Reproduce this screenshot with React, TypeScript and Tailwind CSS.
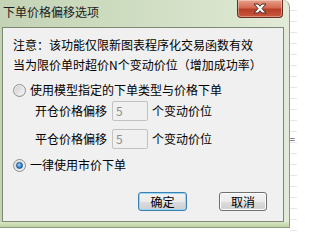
import React from 'react'

const font = { fontFamily: '"Noto Sans CJK SC", "Liberation Sans", sans-serif' }

function Radio({ checked }: { checked?: boolean }) {
  return (
    <span className="relative flex h-[13px] w-[13px] shrink-0 items-center justify-center rounded-full border border-[#8e8f8f] bg-[radial-gradient(circle_at_50%_40%,#ffffff,#dcdcdc)]">
      <span className="flex h-[9px] w-[9px] items-center justify-center rounded-full bg-[linear-gradient(135deg,#cfcfcf,#f7f7f7)]">
        {checked && (
          <span className="h-[7px] w-[7px] rounded-full border border-[#1d4f8c] bg-[radial-gradient(circle_at_40%_35%,#9fd6ff,#2f7fd3_60%,#1b5aa6)]" />
        )}
      </span>
    </span>
  )
}

function OffsetRow({ label }: { label: string }) {
  return (
    <div className="flex h-[20px] items-center pl-[22px]">
      <span className="w-[77px] leading-[20px]">{label}</span>
      <div className="flex h-[20px] w-[36px] items-center rounded-[2px] border border-[#c2c2c2] bg-[#f0f0f0] pl-[3px] text-[12px] leading-none text-[#8d8d8d]">
        5
      </div>
      <span className="ml-[4px] leading-[20px]">个变动价位</span>
    </div>
  )
}

function CloseIcon() {
  return (
    <svg width="14" height="11" viewBox="0 0 14 11">
      <path
        d="M1 1h4l2 2.3L9 1h4L9 5.5 13 10H9L7 7.7 5 10H1l4-4.5z"
        fill="#ffffff"
        stroke="#4a2a22"
        strokeWidth="1"
        strokeLinejoin="round"
      />
    </svg>
  )
}

export default function App() {
  return (
    <div
      className="relative h-[232px] w-[297px] overflow-hidden bg-white text-[12px] text-black"
      style={font}
    >
      {/* desktop lines behind the dialog */}
      <div className="absolute right-0 top-0 h-full w-[7px] bg-[repeating-linear-gradient(to_bottom,#ffffff_0px,#ffffff_10px,#e6e6e6_10px,#e6e6e6_11px)]" />
      <div className="absolute right-[2px] top-[134px] text-[10px] leading-none text-[#666]">=</div>

      <div className="relative flex h-[228px] w-[290px] flex-col rounded-tr-[7px] border-r border-b border-[#8b9a80] bg-[linear-gradient(to_right,#c4d2b6,#cddbbf_40%,#d8e4cc_75%,#e2ebd8)]">
        {/* title bar */}
        <div className="flex h-[27px] shrink-0 items-start">
          <span className="pl-[3px] pt-[4px] text-[12px] leading-[16px] text-[#1c1c1c]">下单价格偏移选项</span>
          <div className="ml-auto mr-[6px] flex h-[18px] w-[46px] items-center justify-center rounded-b-[4px] border border-t-0 border-[#6d2c1f] bg-[linear-gradient(to_bottom,#e8a18c,#d46b51_45%,#b8402a_55%,#c9573d)] shadow-[inset_0_0_0_1px_rgba(255,255,255,0.35)]">
            <CloseIcon />
          </div>
        </div>

        {/* client area */}
        <div className="ml-[2px] mr-[5px] flex h-[195px] flex-col border border-[#7d8875] bg-[#f0f0f0] pl-[10px] pt-[7px]">
          <p className="leading-[20px]">注意：该功能仅限新图表程序化交易函数有效</p>
          <p className="leading-[20px]">当为限价单时超价N个变动价位（增加成功率）</p>

          <div className="mt-[5px] flex h-[20px] items-center gap-[4px]">
            <Radio />
            <span className="leading-[20px]">使用模型指定的下单类型与价格下单</span>
          </div>

          <div className="mt-[1px] flex flex-col gap-[8px]">
            <OffsetRow label="开仓价格偏移" />
            <OffsetRow label="平仓价格偏移" />
          </div>

          <div className="mt-[6px] flex h-[20px] items-center gap-[4px]">
            <Radio checked />
            <span className="leading-[20px]">一律使用市价下单</span>
          </div>

          <div className="mr-[16px] mt-[17px] flex justify-end gap-[32px]">
            <button className="flex h-[19px] w-[49px] items-center justify-center rounded-[3px] border border-[#3c7fb1] bg-[linear-gradient(to_bottom,#f2f2f2,#ebebeb_50%,#dddddd_50%,#cfcfcf)] leading-none shadow-[inset_0_0_0_1px_#94d6f3]">
              确定
            </button>
            <button className="flex h-[19px] w-[48px] items-center justify-center rounded-[3px] border border-[#707070] bg-[linear-gradient(to_bottom,#f2f2f2,#ebebeb_50%,#dddddd_50%,#cfcfcf)] leading-none shadow-[inset_0_0_0_1px_#fcfcfc]">
              取消
            </button>
          </div>
        </div>

        {/* bottom frame */}
        <div className="flex-1 bg-[linear-gradient(to_bottom,#d9e7c6,#bcd3a0)]" />
      </div>
    </div>
  )
}
